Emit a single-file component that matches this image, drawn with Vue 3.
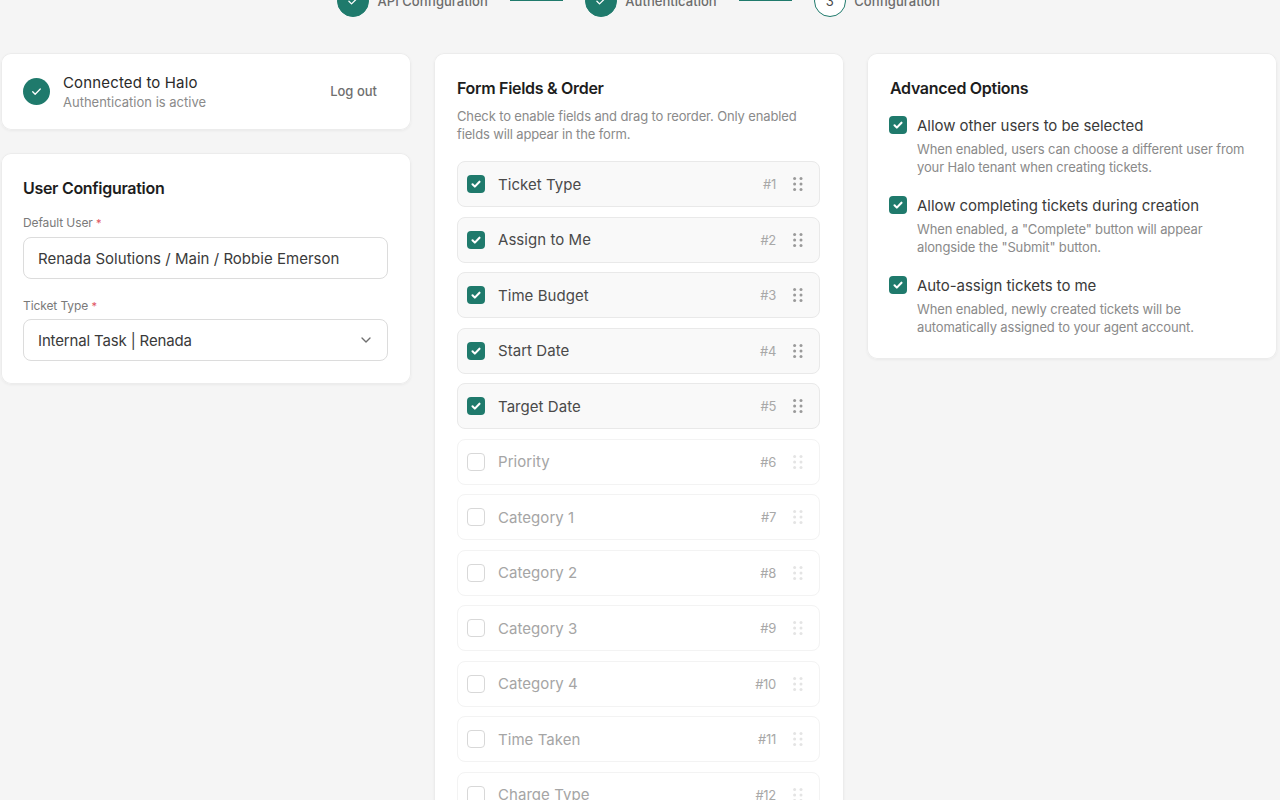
<template>
  <div class="page">
    <!-- stepper, partly scrolled off the top -->
    <div class="stepper">
      <template v-for="(step, i) in steps" :key="step.label">
        <div class="step">
          <span class="step-dot" :class="{ done: step.done }">
            <svg v-if="step.done" width="14" height="14" viewBox="0 0 24 24" fill="none" stroke="#fff" stroke-width="2.2" stroke-linecap="round" stroke-linejoin="round"><path d="M5 12.5l4.5 4.5L19 7.5" /></svg>
            <template v-else>{{ i + 1 }}</template>
          </span>
          <span class="step-label">{{ step.label }}</span>
        </div>
        <span v-if="i < steps.length - 1" class="step-line"></span>
      </template>
    </div>

    <div class="columns">
      <div class="col">
        <section class="card status">
          <span class="status-icon">
            <svg width="13" height="13" viewBox="0 0 24 24" fill="none" stroke="#fff" stroke-width="2.4" stroke-linecap="round" stroke-linejoin="round"><path d="M5 12.5l4.5 4.5L19 7.5" /></svg>
          </span>
          <div class="status-text">
            <div class="status-title">Connected to Halo</div>
            <div class="status-sub">Authentication is active</div>
          </div>
          <button class="logout">Log out</button>
        </section>

        <section class="card user-config">
          <h2>User Configuration</h2>
          <label class="field-label">Default User <em>*</em></label>
          <div class="input">Renada Solutions / Main / Robbie Emerson</div>
          <label class="field-label second">Ticket Type <em>*</em></label>
          <div class="input select">
            <span>Internal Task | Renada</span>
            <svg width="16" height="16" viewBox="0 0 24 24" fill="none" stroke="#6f6f6f" stroke-width="2" stroke-linecap="round" stroke-linejoin="round"><path d="M6 9l6 6 6-6" /></svg>
          </div>
        </section>
      </div>

      <div class="col">
        <section class="card fields">
          <h2>Form Fields &amp; Order</h2>
          <p class="hint">Check to enable fields and drag to reorder. Only enabled fields will appear in the form.</p>
          <div class="field-list">
            <div v-for="(f, i) in fields" :key="f.name" class="field-row" :class="{ on: f.on }">
              <span class="box" :class="{ checked: f.on }">
                <svg v-if="f.on" width="14" height="14" viewBox="0 0 24 24" fill="none" stroke="#fff" stroke-width="3.6" stroke-linecap="round" stroke-linejoin="round"><path d="M6 12.5l4 4L18 8" /></svg>
              </span>
              <span class="field-name">{{ f.name }}</span>
              <span class="field-num">#{{ i + 1 }}</span>
              <svg class="grip" width="10" height="14" viewBox="0 0 10 14"><g fill="currentColor"><circle cx="1.6" cy="1.6" r="1.5" /><circle cx="8" cy="1.6" r="1.5" /><circle cx="1.6" cy="7" r="1.5" /><circle cx="8" cy="7" r="1.5" /><circle cx="1.6" cy="12.4" r="1.5" /><circle cx="8" cy="12.4" r="1.5" /></g></svg>
            </div>
          </div>
        </section>
      </div>

      <div class="col">
        <section class="card advanced">
          <h2>Advanced Options</h2>
          <div v-for="o in options" :key="o.title" class="option">
            <span class="box checked">
              <svg width="14" height="14" viewBox="0 0 24 24" fill="none" stroke="#fff" stroke-width="3.6" stroke-linecap="round" stroke-linejoin="round"><path d="M6 12.5l4 4L18 8" /></svg>
            </span>
            <div>
              <div class="option-title">{{ o.title }}</div>
              <div class="option-desc">{{ o.desc }}</div>
            </div>
          </div>
        </section>
      </div>
    </div>
  </div>
</template>

<script setup>
const steps = [
  { label: 'API Configuration', done: true },
  { label: 'Authentication', done: true },
  { label: 'Configuration', done: false }
]

const fields = [
  { name: 'Ticket Type', on: true },
  { name: 'Assign to Me', on: true },
  { name: 'Time Budget', on: true },
  { name: 'Start Date', on: true },
  { name: 'Target Date', on: true },
  { name: 'Priority', on: false },
  { name: 'Category 1', on: false },
  { name: 'Category 2', on: false },
  { name: 'Category 3', on: false },
  { name: 'Category 4', on: false },
  { name: 'Time Taken', on: false },
  { name: 'Charge Type', on: false }
]

const options = [
  { title: 'Allow other users to be selected', desc: 'When enabled, users can choose a different user from your Halo tenant when creating tickets.' },
  { title: 'Allow completing tickets during creation', desc: 'When enabled, a "Complete" button will appear alongside the "Submit" button.' },
  { title: 'Auto-assign tickets to me', desc: 'When enabled, newly created tickets will be automatically assigned to your agent account.' }
]
</script>

<style>
html, body {
  margin: 0;
  height: 800px;
  overflow: hidden;
  background: #f5f5f5;
}
</style>

<style scoped>
.page {
  height: 800px;
  overflow: hidden;
  font-family: Inter, "Liberation Sans", sans-serif;
  color: #2b2b2b;
}

.stepper {
  display: flex;
  align-items: center;
  margin-top: -15px;
  height: 32px;
  padding-left: 337px;
}
.step {
  display: flex;
  align-items: center;
  gap: 8.5px;
}
.step-dot {
  width: 32px;
  height: 32px;
  box-sizing: border-box;
  border-radius: 50%;
  border: 1px solid #1f7a6c;
  display: flex;
  align-items: center;
  justify-content: center;
  font-size: 13px;
  color: #4a4a4a;
  background: #fff;
}
.step-dot.done {
  background: #1f7a6c;
}
.step-label {
  font-size: 13px;
  letter-spacing: 0.04px;
  font-weight: 500;
  color: #6c6c6c;
}
.step-line {
  width: 53px;
  height: 1px;
  background: #1f7a6c;
  margin: 0 22px;
  position: relative;
  top: -1px;
}

.columns {
  display: grid;
  grid-template-columns: repeat(3, 410px);
  column-gap: 23px;
  margin-top: 36px;
  margin-left: 1px;
}
.col {
  display: flex;
  flex-direction: column;
  gap: 23px;
}
.card {
  background: #fff;
  border-radius: 10px;
  box-shadow: inset 0 0 0 1px #ececec, 0 1px 3px rgba(0, 0, 0, 0.05);
  box-sizing: border-box;
}
h2 {
  margin: 0;
  font-size: 16px;
  line-height: 24px;
  font-weight: 600;
  letter-spacing: -0.3px;
  color: #1d1d1d;
}

.status {
  display: flex;
  align-items: center;
  height: 77px;
  padding: 0 22px;
}
.status-icon {
  width: 27px;
  height: 27px;
  border-radius: 50%;
  background: #1f7a6c;
  display: flex;
  align-items: center;
  justify-content: center;
  margin-right: 13px;
}
.status-text {
  flex: 1;
  padding-top: 1px;
}
.status-title {
  font-size: 15px;
  line-height: 20px;
  letter-spacing: 0.15px;
  color: #2a2a2a;
}
.status-sub {
  font-size: 13px;
  line-height: 18px;
  color: #8a8a8a;
}
.logout {
  border: none;
  background: none;
  padding: 0 12px 2px 0;
  font: inherit;
  font-size: 13px;
  font-weight: 500;
  letter-spacing: 0;
  color: #6f6f6f;
}

.user-config {
  height: 231px;
  padding: 23px 23px 0 22px;
}
.field-label {
  display: block;
  margin-top: 15px;
  font-size: 12px;
  line-height: 16px;
  letter-spacing: -0.1px;
  color: #7a7a7a;
}
.field-label.second {
  margin-top: 19px;
}
.field-label em {
  font-style: normal;
  font-size: 11px;
  color: #e0525e;
}
.input {
  margin-top: 6px;
  height: 42px;
  box-sizing: border-box;
  border: 1px solid #dcdcdc;
  border-radius: 8px;
  display: flex;
  align-items: center;
  padding: 0 14px;
  font-size: 15px;
  letter-spacing: 0.02px;
  color: #3a3a3a;
}
.select {
  margin-top: 5px;
  padding-right: 13px;
  justify-content: space-between;
  letter-spacing: -0.15px;
}

.fields {
  padding: 23px 24px 24px 23px;
}
.hint {
  margin: 7px 0 0;
  font-size: 13px;
  line-height: 18px;
  letter-spacing: -0.14px;
  color: #8a8a8a;
}
.field-list {
  margin-top: 18px;
  display: flex;
  flex-direction: column;
  gap: 9.5px;
}
.field-row {
  height: 46px;
  box-sizing: border-box;
  display: flex;
  align-items: center;
  padding: 0 16px 0 9px;
  border: 1px solid #f3f3f3;
  border-radius: 8px;
  color: #a5a5a5;
}
.field-row.on {
  background: #f9f9f9;
  border-color: #e9e9e9;
  color: #4a4a4a;
}
.box {
  flex: none;
  width: 18px;
  height: 18px;
  box-sizing: border-box;
  border-radius: 4px;
  border: 1.5px solid #d8d8d8;
  background: #fff;
  display: flex;
  align-items: center;
  justify-content: center;
}
.box.checked {
  border: none;
  background: #1f7a6c;
}
.field-name {
  flex: 1;
  margin-left: 13px;
  font-size: 15px;
  letter-spacing: 0.05px;
}
.field-num {
  font-size: 13px;
  color: #a8a8a8;
  margin-right: 17px;
  letter-spacing: -0.3px;
}
.grip {
  color: #e4e4e4;
}
.on .grip {
  color: #9a9a9a;
}

.advanced {
  height: 306px;
  padding: 23px 23px 0 22px;
}
.advanced h2 {
  margin-left: 1px;
}
.option {
  display: flex;
  gap: 10px;
  margin-top: 17px;
}
.option + .option {
  margin-top: 21px;
}
.option .box {
  margin-top: -1px;
}
.option-title {
  font-size: 15px;
  line-height: 18px;
  letter-spacing: -0.05px;
  color: #3a3a3a;
}
.option-desc {
  margin-top: 5px;
  font-size: 13px;
  line-height: 18px;
  letter-spacing: -0.13px;
  color: #8a8a8a;
}
</style>
